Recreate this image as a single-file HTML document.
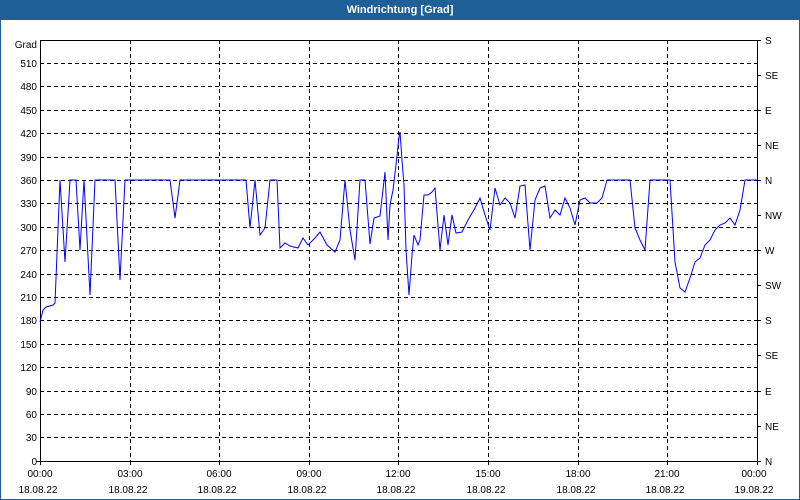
<!DOCTYPE html>
<html><head><meta charset="utf-8"><style>
html,body{margin:0;padding:0;width:800px;height:500px;overflow:hidden;background:#fff;font-family:"Liberation Sans",sans-serif;}
</style></head><body>
<svg width="800" height="500" xmlns="http://www.w3.org/2000/svg" style="display:block">
<rect x="0" y="0" width="800" height="500" fill="#1d5f96"/>
<rect x="1" y="20" width="798" height="479" fill="#fff"/>
<text x="400" y="13" font-size="11" font-weight="bold" fill="#fff" text-anchor="middle" font-family="Liberation Sans,sans-serif">Windrichtung [Grad]</text>
<g stroke="#000" stroke-width="1" stroke-dasharray="4,3" shape-rendering="crispEdges">
<line x1="40" y1="63.5" x2="757" y2="63.5"/><line x1="40" y1="86.5" x2="757" y2="86.5"/><line x1="40" y1="110.5" x2="757" y2="110.5"/><line x1="40" y1="133.5" x2="757" y2="133.5"/><line x1="40" y1="157.5" x2="757" y2="157.5"/><line x1="40" y1="180.5" x2="757" y2="180.5"/><line x1="40" y1="203.5" x2="757" y2="203.5"/><line x1="40" y1="227.5" x2="757" y2="227.5"/><line x1="40" y1="250.5" x2="757" y2="250.5"/><line x1="40" y1="274.5" x2="757" y2="274.5"/><line x1="40" y1="297.5" x2="757" y2="297.5"/><line x1="40" y1="320.5" x2="757" y2="320.5"/><line x1="40" y1="344.5" x2="757" y2="344.5"/><line x1="40" y1="367.5" x2="757" y2="367.5"/><line x1="40" y1="391.5" x2="757" y2="391.5"/><line x1="40" y1="414.5" x2="757" y2="414.5"/><line x1="40" y1="437.5" x2="757" y2="437.5"/>
<line x1="130.5" y1="40" x2="130.5" y2="461"/><line x1="219.5" y1="40" x2="219.5" y2="461"/><line x1="309.5" y1="40" x2="309.5" y2="461"/><line x1="398.5" y1="40" x2="398.5" y2="461"/><line x1="488.5" y1="40" x2="488.5" y2="461"/><line x1="578.5" y1="40" x2="578.5" y2="461"/><line x1="667.5" y1="40" x2="667.5" y2="461"/>
</g>
<rect x="40.5" y="40.5" width="717" height="421" fill="none" stroke="#000" stroke-width="1" shape-rendering="crispEdges"/>
<g stroke="#000" shape-rendering="crispEdges">
<line x1="36" y1="461.5" x2="40" y2="461.5"/>
<line x1="757" y1="40.5" x2="761" y2="40.5"/><line x1="757" y1="75.5" x2="761" y2="75.5"/><line x1="757" y1="110.5" x2="761" y2="110.5"/><line x1="757" y1="145.5" x2="761" y2="145.5"/><line x1="757" y1="180.5" x2="761" y2="180.5"/><line x1="757" y1="215.5" x2="761" y2="215.5"/><line x1="757" y1="250.5" x2="761" y2="250.5"/><line x1="757" y1="285.5" x2="761" y2="285.5"/><line x1="757" y1="320.5" x2="761" y2="320.5"/><line x1="757" y1="355.5" x2="761" y2="355.5"/><line x1="757" y1="391.5" x2="761" y2="391.5"/><line x1="757" y1="426.5" x2="761" y2="426.5"/><line x1="757" y1="461.5" x2="761" y2="461.5"/>
<line x1="40.5" y1="461" x2="40.5" y2="465"/><line x1="130.5" y1="461" x2="130.5" y2="465"/><line x1="219.5" y1="461" x2="219.5" y2="465"/><line x1="309.5" y1="461" x2="309.5" y2="465"/><line x1="398.5" y1="461" x2="398.5" y2="465"/><line x1="488.5" y1="461" x2="488.5" y2="465"/><line x1="578.5" y1="461" x2="578.5" y2="465"/><line x1="667.5" y1="461" x2="667.5" y2="465"/><line x1="757.5" y1="461" x2="757.5" y2="465"/>
</g>
<g font-size="10" fill="#000" text-anchor="end" font-family="Liberation Sans,sans-serif">
<text x="37" y="48">Grad</text>
<text x="37" y="67">510</text><text x="37" y="90">480</text><text x="37" y="114">450</text><text x="37" y="137">420</text><text x="37" y="161">390</text><text x="37" y="184">360</text><text x="37" y="207">330</text><text x="37" y="231">300</text><text x="37" y="254">270</text><text x="37" y="278">240</text><text x="37" y="301">210</text><text x="37" y="324">180</text><text x="37" y="348">150</text><text x="37" y="371">120</text><text x="37" y="395">90</text><text x="37" y="418">60</text><text x="37" y="441">30</text><text x="37" y="465">0</text>
</g>
<g font-size="10" fill="#000" font-family="Liberation Sans,sans-serif">
<text x="765" y="44">S</text><text x="765" y="79">SE</text><text x="765" y="114">E</text><text x="765" y="149">NE</text><text x="765" y="184">N</text><text x="765" y="219">NW</text><text x="765" y="254">W</text><text x="765" y="289">SW</text><text x="765" y="324">S</text><text x="765" y="359">SE</text><text x="765" y="395">E</text><text x="765" y="430">NE</text><text x="765" y="465">N</text>
</g>
<g font-size="10" fill="#000" text-anchor="middle" font-family="Liberation Sans,sans-serif">
<text x="40" y="477">00:00</text><text x="38" y="493">18.08.22</text>
<text x="130" y="477">03:00</text><text x="128" y="493">18.08.22</text>
<text x="219" y="477">06:00</text><text x="217" y="493">18.08.22</text>
<text x="309" y="477">09:00</text><text x="307" y="493">18.08.22</text>
<text x="398" y="477">12:00</text><text x="396" y="493">18.08.22</text>
<text x="488" y="477">15:00</text><text x="486" y="493">18.08.22</text>
<text x="578" y="477">18:00</text><text x="576" y="493">18.08.22</text>
<text x="667" y="477">21:00</text><text x="665" y="493">18.08.22</text>
<text x="754" y="477">00:00</text><text x="754" y="493">19.08.22</text>
</g>
<polyline fill="none" stroke="#0000ff" stroke-width="1" points="40,322 43,310 46,307 53,305 55,303 60,180 65,262 70,180 76,180 80,250 84,180 90,295 95,180 115,180 120,280 125,180 170,180 175,218 180,180 246,180 250,228 255,180 260,235 265,228 270,180 277,180 280,248 285,243 290,246 298,248 303,238 308,245 315,238 320,232 327,245 335,252 340,240 345,180 350,230 355,260 360,180 365,180 370,244 374,218 377,217 380,216 385,172 388,240 390,205 393,190 396,165 399,137 400,132 402,160 404,185 406,250 409,295 412,255 414,235 418,245 420,240 424,195 428,195 432,192 435,188 440,250 444,215 448,245 452,215 456,233 462,232 468,220 475,208 480,198 485,215 490,230 495,188 500,205 505,198 510,203 515,218 520,186 525,185 530,250 535,200 540,188 545,186 550,218 555,210 560,215 565,198 570,208 575,225 580,200 585,198 590,203 597,203 602,198 607,180 630,180 635,228 640,240 645,250 650,180 670,180 675,262 680,288 685,292 690,278 695,262 700,258 705,245 710,240 715,230 720,225 725,223 730,218 735,225 740,210 745,180 757,180"/>
</svg>
</body></html>
